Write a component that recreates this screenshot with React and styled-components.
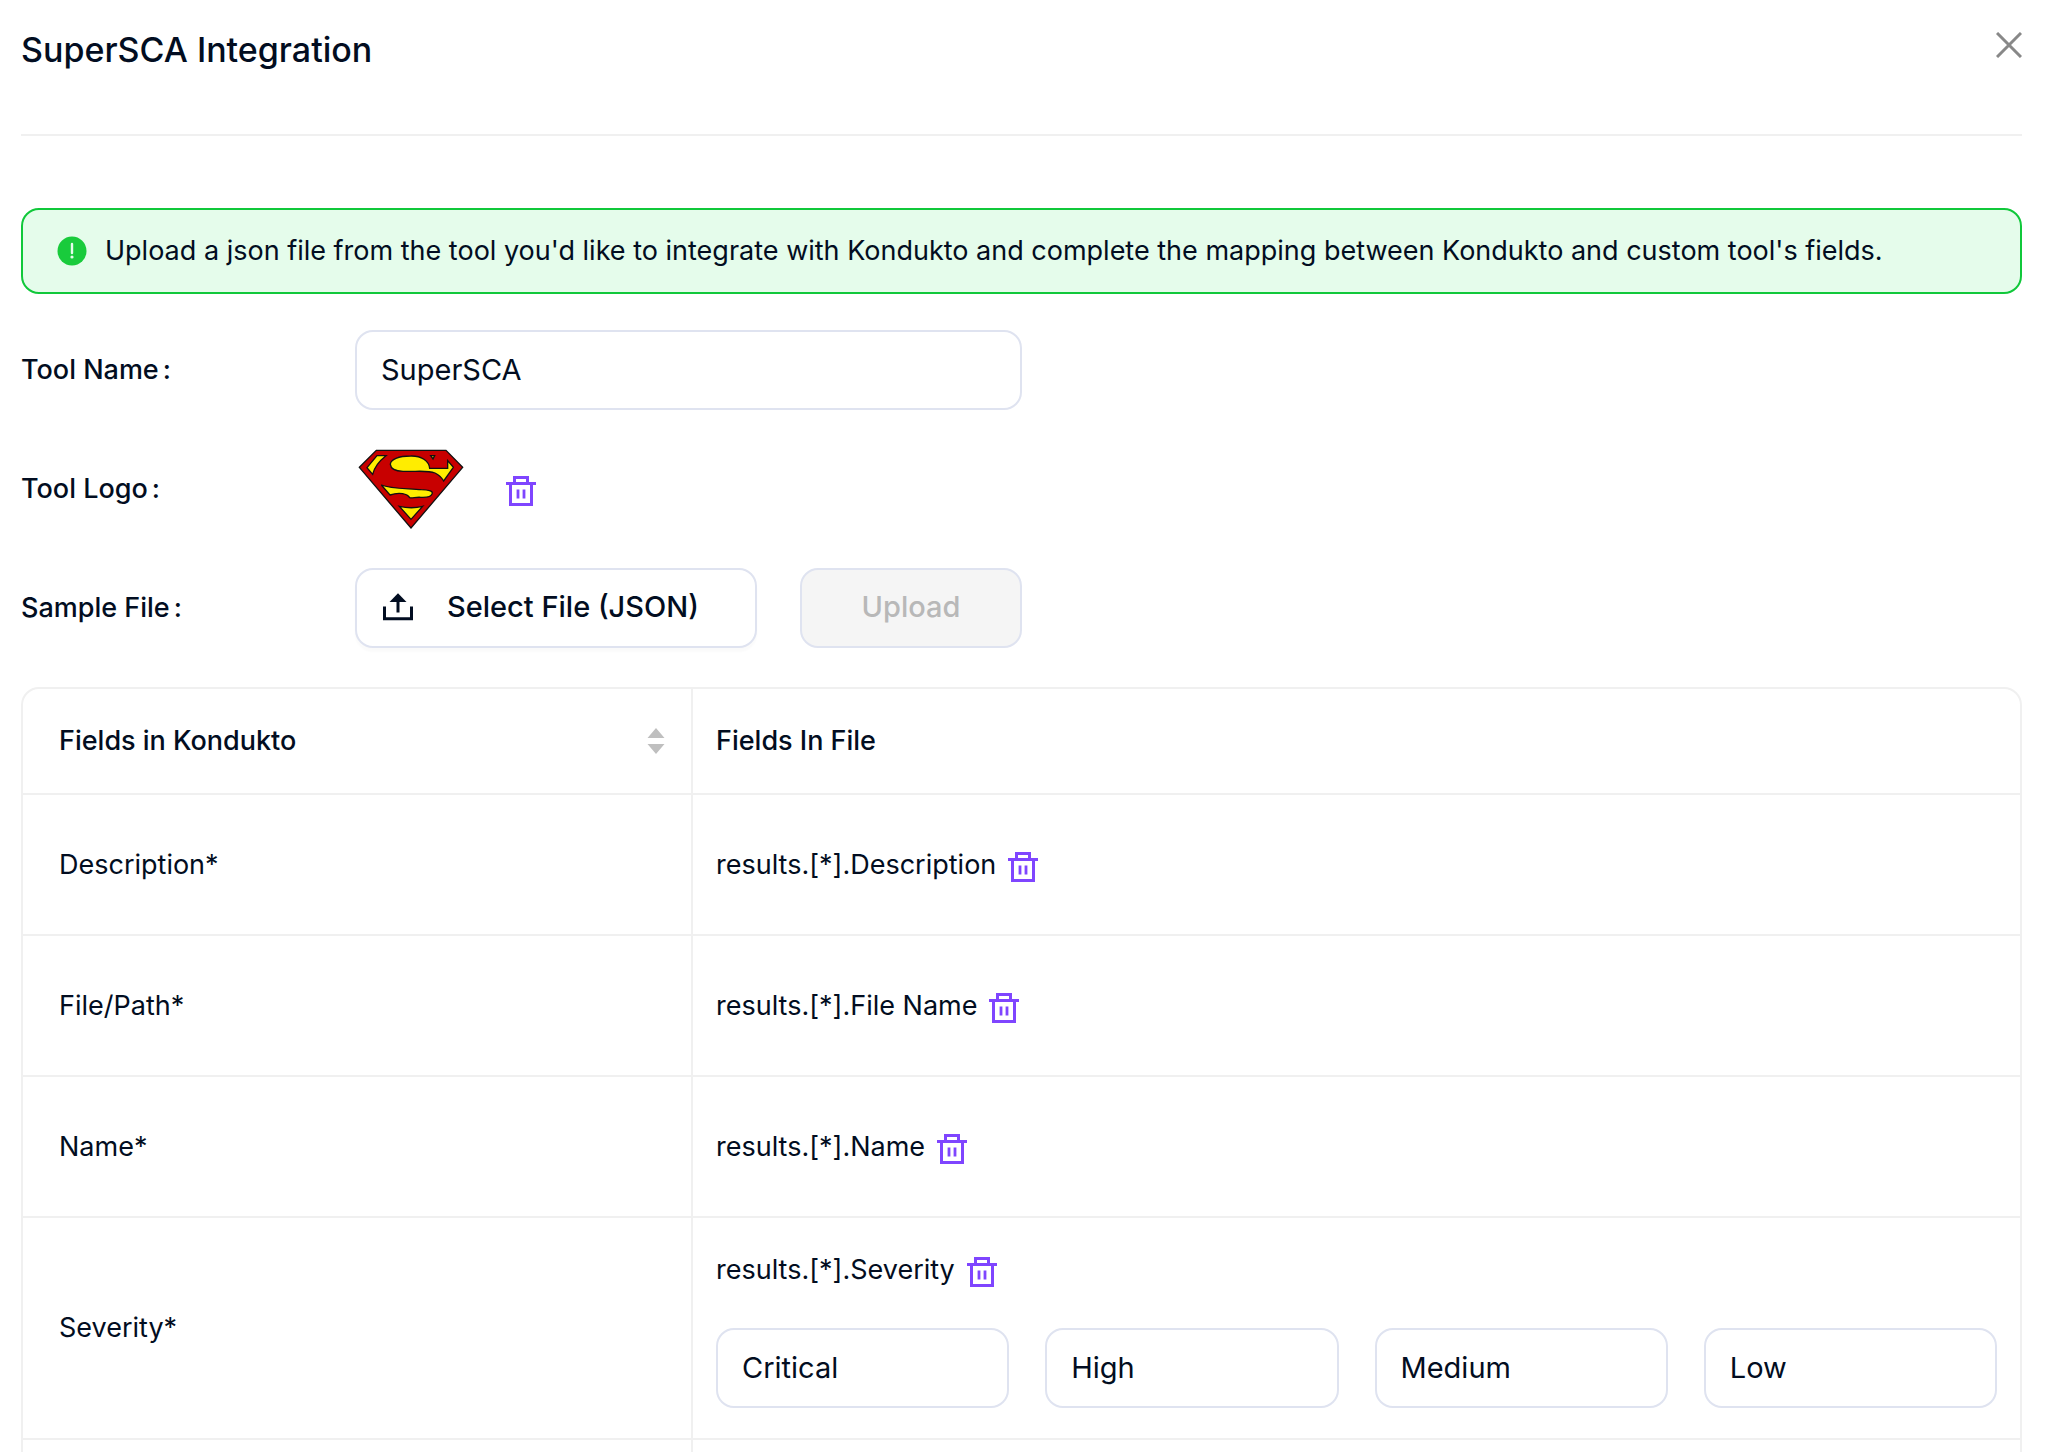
import React, { useState } from 'react';
import styled, { createGlobalStyle } from 'styled-components';

const fields = [
  { label: 'Description*', path: 'results.[*].Description' },
  { label: 'File/Path*', path: 'results.[*].File Name' },
  { label: 'Name*', path: 'results.[*].Name' },
  { label: 'Severity*', path: 'results.[*].Severity', levels: ['Critical', 'High', 'Medium', 'Low'] },
];

const TrashIcon = () => (
  <svg width='30' height='30' viewBox='0 0 30 30' fill='none' stroke='currentColor' aria-hidden='true'>
    <path d='M0 7.500h30M8.500 7V1.500H21.500V7M4.500 7v21.500h21V7' strokeWidth='3' />
    <path d='M12 13.500v9M18 13.500v9' strokeWidth='2.800' />
  </svg>
);

const UploadIcon = () => (
  <svg width='30' height='28' viewBox='0 0 30 28' fill='none' stroke='currentColor' aria-hidden='true'>
    <path d='M1.500 13.500v12.300h27V13.500M15 19.500V8' strokeWidth='3' />
    <path d='M15 .3l8.500 8.700h-17z' fill='currentColor' stroke='none' />
  </svg>
);

const CloseIcon = () => (
  <svg width='26' height='26' viewBox='0 0 26 26' fill='none' stroke='currentColor' aria-hidden='true'>
    <path d='M1 1l24 24M25 1L1 25' strokeWidth='3' />
  </svg>
);

const AlertIcon = () => (
  <svg width='30' height='30' viewBox='0 0 30 30' aria-hidden='true'>
    <circle cx='15' cy='15' r='14.500' fill='#19cb3c' />
    <path d='M15 8v9' stroke='#e5fceb' strokeWidth='2.400' strokeLinecap='round' />
    <circle cx='15' cy='21' r='1.600' fill='#e5fceb' />
  </svg>
);

const SortIcon = () => (
  <svg width='18' height='28' viewBox='0 0 18 28' fill='#bfbfbf' aria-hidden='true'>
    <path d='M9 1l8.500 10H.5zM9 27L.5 17h17z' />
  </svg>
);

const ToolLogo = () => (
  <svg width='106' height='80' viewBox='0 0 318 240' role='img' aria-label='SuperSCA logo'>
    <g stroke='#111' strokeWidth='4' strokeLinejoin='miter'>
      <path d='M55 4H264L314 55L159 237L4 55z' fill='#c80000' />
      <g fill='#ffed00'>
        <path d='M57 20H84C66 34 50 50 44 76L27 56z' />
        <path d='M215 58C213 36 190 20 158 21C122 21 97 31 97 46C98 58 110 66 135 67C170 69 205 62 231 72C244 78 251 86 257 96L286 55L269 35V58z' />
        <path d='M218 20H230L225 30z' />
        <path d='M70 108C100 120 150 118 190 122C210 123 224 125 223 133C220 144 206 146 188 145C172 144 163 148 155 146C148 134 124 128 96 138z' />
        <path d='M124 172C145 177 175 177 194 172L159 211z' />
      </g>
    </g>
  </svg>
);

const MappingRow = ({ label, path, levels }) => (
  <tr>
    <Cell>{label}</Cell>
    <Cell>
      <Path>
        {path}
        <IconButton type='button' aria-label={`Remove ${path}`}><TrashIcon /></IconButton>
      </Path>
      {levels && (
        <Levels>
          {levels.map(level => (
            <TextInput key={level} aria-label={level} defaultValue={level} />
          ))}
        </Levels>
      )}
    </Cell>
  </tr>
);

export default function App() {
  const [name, setName] = useState('SuperSCA');

  return (
    <Drawer>
      <GlobalStyle />
      <Header>
        <Title>SuperSCA Integration</Title>
        <IconButton type='button' aria-label='Close' $muted><CloseIcon /></IconButton>
      </Header>
      <Alert role='status'>
        <AlertIcon />
        Upload a json file from the tool you'd like to integrate with Kondukto and complete the mapping between Kondukto and custom tool's fields.
      </Alert>
      <Form>
        <Field>
          <Label htmlFor='tool-name'>Tool Name<Colon>:</Colon></Label>
          <Control>
            <TextInput id='tool-name' value={name} onChange={e => setName(e.target.value)} />
          </Control>
        </Field>
        <Field>
          <Label as='span'>Tool Logo<Colon>:</Colon></Label>
          <LogoControl>
            <ToolLogo />
            <IconButton type='button' aria-label='Remove logo'><TrashIcon /></IconButton>
          </LogoControl>
        </Field>
        <Field>
          <Label htmlFor='sample-file'>Sample File<Colon>:</Colon></Label>
          <Control>
            <SelectButton id='sample-file' type='button'><UploadIcon />Select File (JSON)</SelectButton>
            <UploadButton type='button' disabled>Upload</UploadButton>
          </Control>
        </Field>
      </Form>
      <TableFrame>
        <Table>
          <thead>
            <tr>
              <HeadCell $width='670px'>
                <Sortable type='button'>Fields in Kondukto<SortIcon /></Sortable>
              </HeadCell>
              <HeadCell>Fields In File</HeadCell>
            </tr>
          </thead>
          <tbody>
            {fields.map(field => <MappingRow key={field.label} {...field} />)}
            <tr>
              <Cell />
              <Cell />
            </tr>
          </tbody>
        </Table>
      </TableFrame>
    </Drawer>
  );
}

const GlobalStyle = createGlobalStyle`
  * {
    box-sizing: border-box;
  }
  body {
    margin: 0;
    background: #fff;
    color: #020d21;
    font-family: Inter, 'Liberation Sans', sans-serif;
    font-size: 27px;
    line-height: 44px;
  }
  button, input {
    font: inherit;
    color: inherit;
  }
  svg {
    display: block;
    flex: none;
  }
`

const Drawer = styled.main`
  height: 100vh;
  overflow: hidden;
  padding: 0 26px 0 21px;
`

const Header = styled.header`
  display: flex;
  justify-content: space-between;
  align-items: flex-start;
  height: 136px;
  padding-top: 28px;
  border-bottom: 2px solid #f0f0f0;
`

const Title = styled.h1`
  margin: 0;
  font-size: 34px;
  font-weight: 500;
  line-height: 44px;
`

const IconButton = styled.button`
  padding: 4px 0 0;
  border: 0;
  background: none;
  color: ${props => props.$muted ? '#888' : '#7f45ff'};
  cursor: pointer;
`

const Alert = styled.div`
  display: flex;
  align-items: center;
  gap: 18px;
  min-height: 86px;
  margin-top: 72px;
  padding: 0 34px;
  border: 2px solid #10c83a;
  border-radius: 18px;
  background: #e5fceb;
`

const Form = styled.form`
  display: grid;
  gap: 39px;
  margin: 36px 0 39px;
`

const Field = styled.div`
  display: grid;
  grid-template-columns: 334px 1fr;
  align-items: center;
  min-height: 80px;
`

const Label = styled.label`
  font-weight: 500;
`

const Colon = styled.span`
  margin-left: 4px;
`

const Control = styled.div`
  display: flex;
  gap: 43px;
  width: 667px;
`

const LogoControl = styled(Control)`
  align-items: center;
  gap: 42px;
  padding-left: 3px;
`

const TextInput = styled.input`
  width: 100%;
  min-width: 0;
  height: 80px;
  padding: 0 24px 2px;
  border: 2px solid #dfe3f0;
  border-radius: 18px;
  background: #fff;
  font-size: 29px;
  outline: none;
`

const SelectButton = styled.button`
  display: flex;
  align-items: center;
  gap: 34px;
  width: 402px;
  height: 80px;
  padding: 0 26px 2px;
  border: 2px solid #dfe3f0;
  border-radius: 18px;
  background: #fff;
  box-shadow: 0 4px 2px rgba(0, 0, 0, 0.02);
  font-size: 29px;
  font-weight: 500;
  white-space: nowrap;
`

const UploadButton = styled.button`
  flex: 1;
  height: 80px;
  padding: 0 0 2px;
  border: 2px solid #dfe3f0;
  border-radius: 18px;
  background: #f5f5f5;
  color: #b8b8b8;
  font-size: 29px;
  font-weight: 500;
`

const TableFrame = styled.div`
  border: 2px solid #f0f0f0;
  border-radius: 18px 18px 0 0;
`

const Table = styled.table`
  width: 100%;
  border-spacing: 0;
  table-layout: fixed;
`

const Cell = styled.td`
  height: 141px;
  padding: 30px 23px;
  border-bottom: 2px solid #f0f0f0;

  &:first-child {
    padding-left: 36px;
    padding-right: 26px;
    border-right: 2px solid #f0f0f0;
  }
`

const HeadCell = styled(Cell).attrs({ as: 'th', scope: 'col' })`
  width: ${props => props.$width || 'auto'};
  height: 106px;
  font-weight: 500;
  text-align: left;
`

const Sortable = styled.button`
  display: flex;
  align-items: center;
  justify-content: space-between;
  width: 100%;
  padding: 0;
  border: 0;
  background: none;
  font-weight: 500;
`

const Path = styled.div`
  display: flex;
  align-items: center;
  gap: 12px;
`

const Levels = styled.div`
  display: grid;
  grid-template-columns: repeat(4, 1fr);
  gap: 36px;
  margin-top: 36px;
`
